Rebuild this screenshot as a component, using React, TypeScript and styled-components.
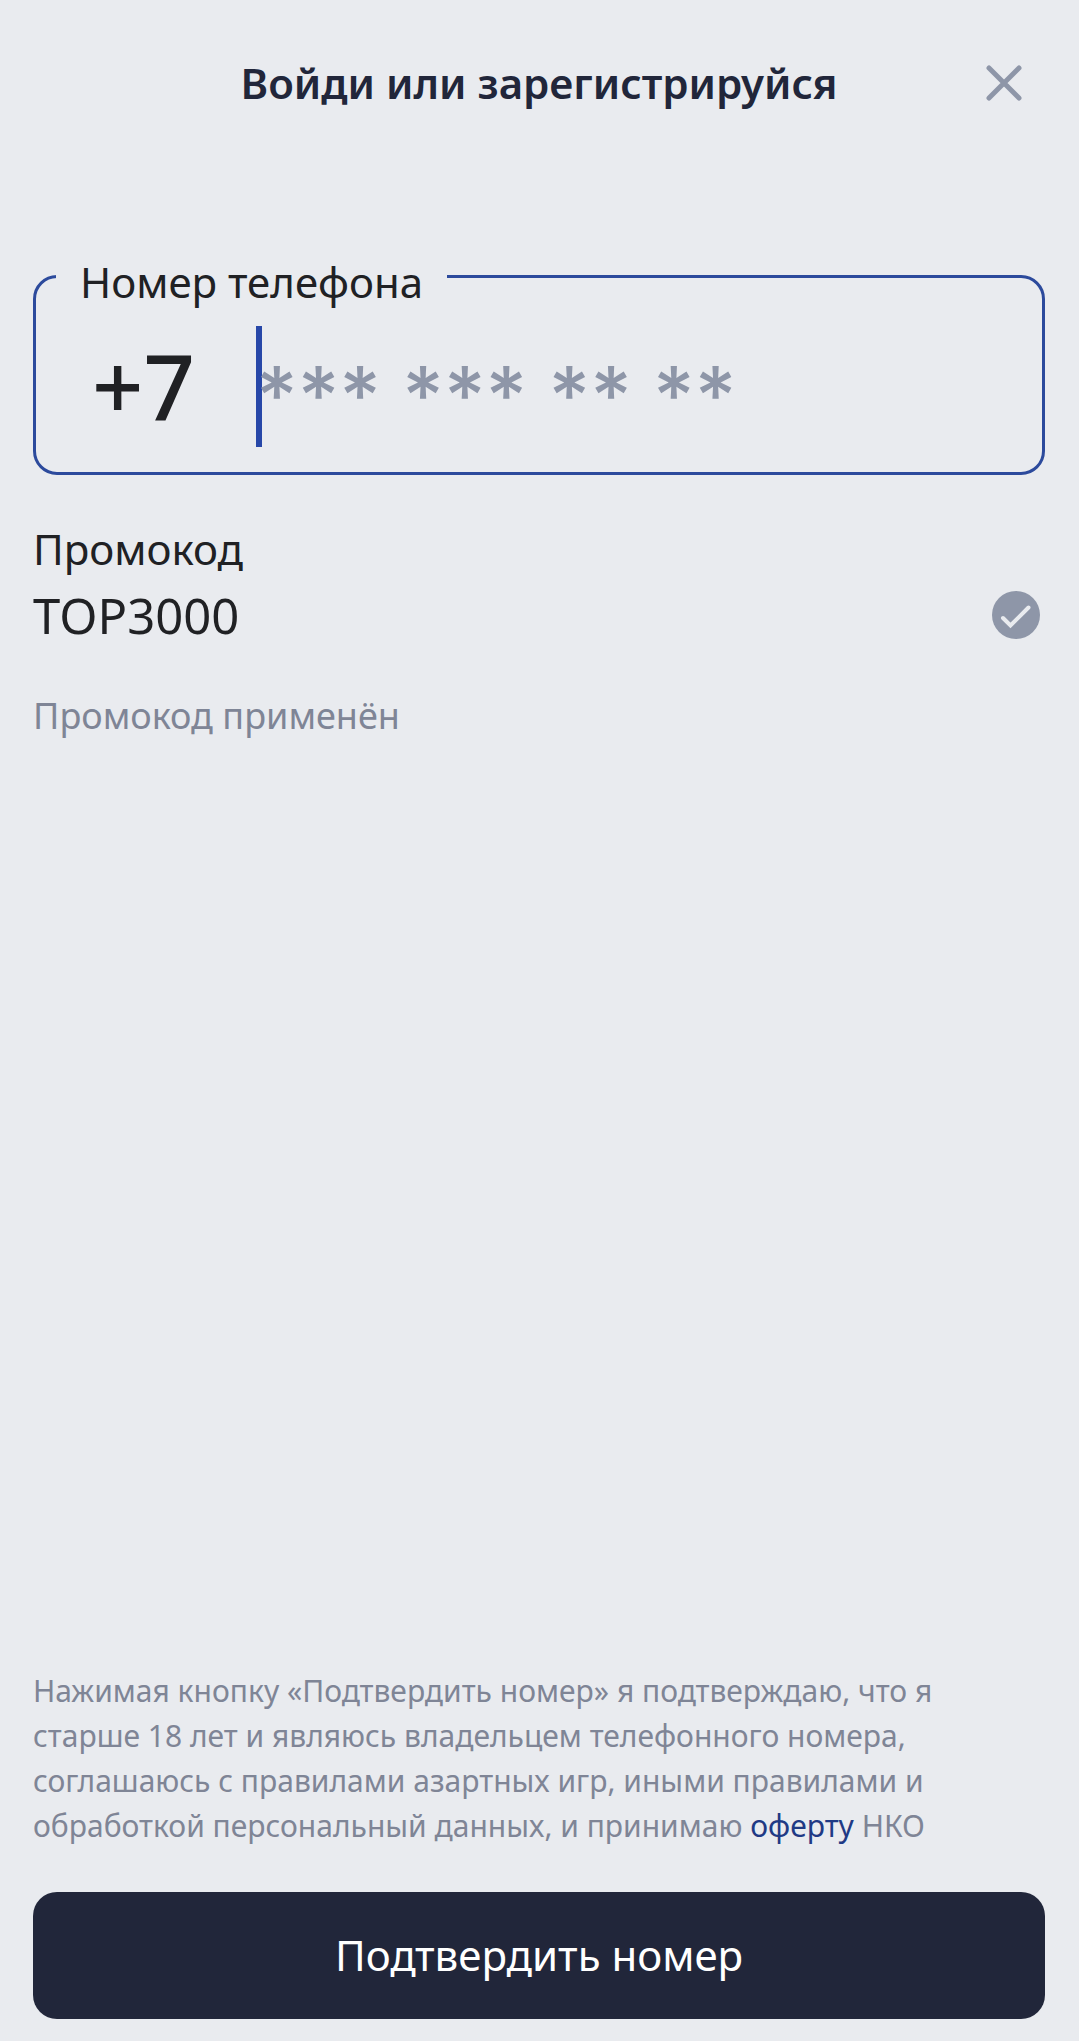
import React from 'react';
import styled, { createGlobalStyle } from 'styled-components';

const color = {
  page: '#e9ebef',
  navy: '#21263a',
  text: '#202124',
  muted: '#7f8596',
  icon: '#8e96a8',
  accent: '#2747a8',
  border: '#2c4a9c',
  link: '#1f3a85',
};

const GlobalStyle = createGlobalStyle`
  *, *::before, *::after { box-sizing: border-box; }
  body {
    margin: 0;
    background: ${color.page};
    color: ${color.text};
    font-family: 'Noto Sans', 'Open Sans', sans-serif;
  }
`;

const Screen = styled.form`
  display: flex;
  flex-direction: column;
  min-height: 100vh;
  padding: 53px 34px 22px 33px;
`;

const Header = styled.header`
  display: grid;
  grid-template-columns: 82px 1fr 82px;
  align-items: center;
  margin-bottom: 127px;
`;

const Title = styled.h1`
  grid-column: 2;
  margin: 0;
  font-size: 42px;
  line-height: 60px;
  font-weight: 600;
  text-align: center;
  white-space: nowrap;
  color: ${color.navy};
`;

const CloseButton = styled.button`
  display: flex;
  align-items: center;
  justify-content: center;
  height: 60px;
  padding: 0;
  border: 0;
  background: none;
  color: ${color.icon};
  cursor: pointer;
`;

const PhoneField = styled.fieldset`
  min-width: 0;
  margin: 0 0 44px;
  padding: 14px 20px 25px;
  border: 3px solid ${color.border};
  border-radius: 24px;
`;

const PhoneLegend = styled.legend`
  padding: 12px 24px 0;
  font-size: 42px;
  line-height: 60px;
`;

const PhoneRow = styled.div`
  display: flex;
  align-items: center;
  height: 121px;
`;

const Prefix = styled.span`
  flex: 0 0 200px;
  padding: 0 0 4px 36px;
  font-size: 90px;
  line-height: 116px;
  font-weight: 500;
`;

const PhoneEntry = styled.div`
  position: relative;
  flex: 1;
  min-width: 0;
  height: 100%;
`;

const Caret = styled.span`
  position: absolute;
  top: 0;
  left: 0;
  width: 6px;
  height: 100%;
  background: ${color.accent};
`;

const PhoneInput = styled.input`
  position: relative;
  width: 100%;
  height: 100%;
  padding: 16px 0 0;
  border: 0;
  outline: 0;
  background: none;
  color: inherit;
  font-family: Inter, 'Noto Sans', sans-serif;
  font-size: 80px;
  font-weight: 500;
  caret-color: transparent;

  &::placeholder {
    color: ${color.icon};
    opacity: 1;
  }
`;

const PromoLabel = styled.label`
  font-size: 42px;
  line-height: 60px;
`;

const PromoRow = styled.div`
  display: flex;
  align-items: center;
  gap: 20px;
  padding-right: 5px;
`;

const PromoInput = styled.input`
  flex: 1;
  min-width: 0;
  height: 72px;
  padding: 0;
  border: 0;
  outline: 0;
  background: none;
  color: inherit;
  font-family: inherit;
  font-size: 49px;
`;

const PromoStatus = styled.p`
  margin: 40px 0 0;
  font-size: 36px;
  line-height: 50px;
  color: ${color.muted};
`;

const Footer = styled.footer`
  display: flex;
  flex-direction: column;
  gap: 44px;
  margin-top: auto;
`;

const Legal = styled.p`
  max-width: 930px;
  margin: 0;
  font-size: 30px;
  line-height: 45px;
  color: ${color.muted};
`;

const OfferLink = styled.a`
  color: ${color.link};
  text-decoration: none;
`;

const SubmitButton = styled.button`
  height: 127px;
  padding: 0 20px 2px;
  border: 0;
  border-radius: 24px;
  background: ${color.navy};
  color: #fff;
  font-family: inherit;
  font-size: 42px;
  cursor: pointer;
`;

export default function App() {
  return (
    <>
      <GlobalStyle />
      <Screen onSubmit={(e: React.FormEvent) => e.preventDefault()}>
        <Header>
          <Title>Войди или зарегистрируйся</Title>
          <CloseButton type="button" aria-label="Закрыть">
            <svg width="36" height="36" viewBox="0 0 36 36" fill="none" stroke="currentColor" strokeWidth="5" strokeLinecap="round">
              <path d="M3 3 33 33M33 3 3 33" />
            </svg>
          </CloseButton>
        </Header>

        <PhoneField>
          <PhoneLegend>
            <label htmlFor="phone">Номер телефона</label>
          </PhoneLegend>
          <PhoneRow>
            <Prefix>+7</Prefix>
            <PhoneEntry>
              <Caret />
              <PhoneInput id="phone" type="tel" placeholder="*** *** ** **" />
            </PhoneEntry>
          </PhoneRow>
        </PhoneField>

        <PromoLabel htmlFor="promo">Промокод</PromoLabel>
        <PromoRow>
          <PromoInput id="promo" type="text" defaultValue="TOP3000" />
          <svg width="48" height="48" viewBox="0 0 48 48" fill="none" aria-hidden="true">
            <circle cx="24" cy="24" r="24" fill={color.icon} />
            <path d="M11 27 18.5 34.5 36.5 16.5" stroke={color.page} strokeWidth="4" strokeLinecap="round" />
          </svg>
        </PromoRow>
        <PromoStatus>Промокод применён</PromoStatus>

        <Footer>
          <Legal>
            Нажимая кнопку «Подтвердить номер» я подтверждаю, что я старше 18 лет и являюсь владельцем
            телефонного номера, соглашаюсь с правилами азартных игр, иными правилами и обработкой
            персональный данных, и принимаю <OfferLink href="#offer">оферту</OfferLink> НКО
          </Legal>
          <SubmitButton type="submit">Подтвердить номер</SubmitButton>
        </Footer>
      </Screen>
    </>
  );
}
